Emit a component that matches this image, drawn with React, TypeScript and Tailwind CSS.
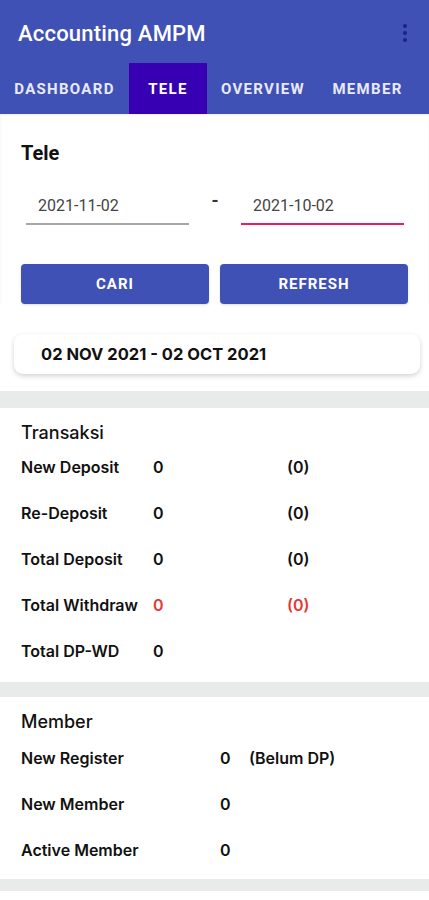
import React from "react";

const tabs = ["DASHBOARD", "TELE", "OVERVIEW", "MEMBER"];
const tabWidths = ["w-[129px]", "w-[78px]", "w-[112px]", "w-[97px]"];

const transaksi = [
    { label: "New Deposit", value: "0", extra: "(0)" },
    { label: "Re-Deposit", value: "0", extra: "(0)" },
    { label: "Total Deposit", value: "0", extra: "(0)" },
    { label: "Total Withdraw", value: "0", extra: "(0)", red: true },
    { label: "Total DP-WD", value: "0", extra: "" },
];

const member = [
    { label: "New Register", value: "0", extra: "(Belum DP)" },
    { label: "New Member", value: "0", extra: "" },
    { label: "Active Member", value: "0", extra: "" },
];

export default function App() {
    return (
        <div className="w-[429px] min-h-[900px] bg-white font-['Roboto',sans-serif]">
            {/* app bar */}
            <div className="bg-[#3f51b5]">
                <div className="h-[63px] flex items-center justify-between pl-[18px] pr-[22px] pt-[3px]">
                    <span className="text-white text-[22px] font-medium tracking-[0.2px]">
                        Accounting AMPM
                    </span>
                    <div className="flex flex-col gap-[3px] items-center">
                        <span className="w-[4px] h-[4px] rounded-full bg-[#1a237e]" />
                        <span className="w-[4px] h-[4px] rounded-full bg-[#1a237e]" />
                        <span className="w-[4px] h-[4px] rounded-full bg-[#1a237e]" />
                    </div>
                </div>
                <div className="h-[51px] flex">
                    {tabs.map((t, i) => (
                        <div
                            key={t}
                            className={`${tabWidths[i]} h-full flex items-center justify-center pt-[2px] text-[15px] font-bold tracking-[1.3px] ${
                                t === "TELE" ? "bg-[#3700b3] text-white" : "text-[#e8eaf6]"
                            }`}>
                            {t}
                        </div>
                    ))}
                </div>
            </div>

            {/* filter */}
            <div className="px-[21px] pt-[27px] shadow-[inset_0_1px_2px_rgba(0,0,0,0.08)]">
                <div className="text-[20px] font-bold text-[#111] leading-[24px]">Tele</div>
                <div className="flex items-end mt-[29px] pl-[5px]">
                    <div className="w-[163px] border-b-[2px] border-[#a8a8a8] pl-[12px] pb-[5px] text-[16px] text-[#444]">
                        2021-11-02
                    </div>
                    <div className="w-[52px] text-center text-[18px] text-[#333] font-bold self-start -mt-[7px]">-</div>
                    <div className="w-[163px] border-b-[2px] border-[#e91e63] pl-[12px] pb-[5px] text-[16px] text-[#444]">
                        2021-10-02
                    </div>
                </div>
                <div className="flex gap-[11px] mt-[39px]">
                    <button className="w-[188px] h-[40px] rounded-[4px] bg-[#3f51b5] text-white text-[15px] font-bold tracking-[1px] shadow-sm">
                        CARI
                    </button>
                    <button className="w-[188px] h-[40px] rounded-[4px] bg-[#3f51b5] text-white text-[15px] font-bold tracking-[1px] shadow-sm">
                        REFRESH
                    </button>
                </div>
            </div>
            <div className="px-[14px] pt-[30px] pb-[17px]">
                <div className="h-[40px] w-[406px] rounded-[9px] bg-white shadow-[0_2px_5px_rgba(0,0,0,0.18)] flex items-center pl-[27px] text-[16.5px] font-bold text-[#111] font-['Inter',sans-serif]">
                    02 NOV 2021 - 02 OCT 2021
                </div>
            </div>

            <div className="h-[17px] bg-[#e9ebeb]" />

            {/* transaksi */}
            <div className="px-[21px] pt-[12px] pb-[8px] font-['Inter',sans-serif]">
                <div className="h-[24px] flex items-center text-[18px] font-medium text-[#111]">Transaksi</div>
                {transaksi.map((r) => (
                    <div key={r.label} className="h-[46px] flex items-center text-[16px] font-semibold text-[#111]">
                        <span className="w-[132px] whitespace-nowrap">{r.label}</span>
                        <span className={`w-[134px] ${r.red ? "text-[#e53935]" : ""}`}>{r.value}</span>
                        <span className={r.red ? "text-[#e53935]" : ""}>{r.extra}</span>
                    </div>
                ))}
            </div>

            <div className="h-[15px] bg-[#e9ebeb]" />

            {/* member */}
            <div className="px-[21px] pt-[12px] pb-[6px] font-['Inter',sans-serif]">
                <div className="h-[24px] flex items-center text-[18px] font-medium text-[#111]">Member</div>
                <div className="mt-[2px]">
                    {member.map((r) => (
                        <div key={r.label} className="h-[46px] flex items-center text-[16px] font-semibold text-[#111]">
                            <span className="w-[199px]">{r.label}</span>
                            <span className="w-[29px]">{r.value}</span>
                            <span>{r.extra}</span>
                        </div>
                    ))}
                </div>
            </div>

            <div className="h-[12px] bg-[#e9ebeb]" />
        </div>
    );
}
